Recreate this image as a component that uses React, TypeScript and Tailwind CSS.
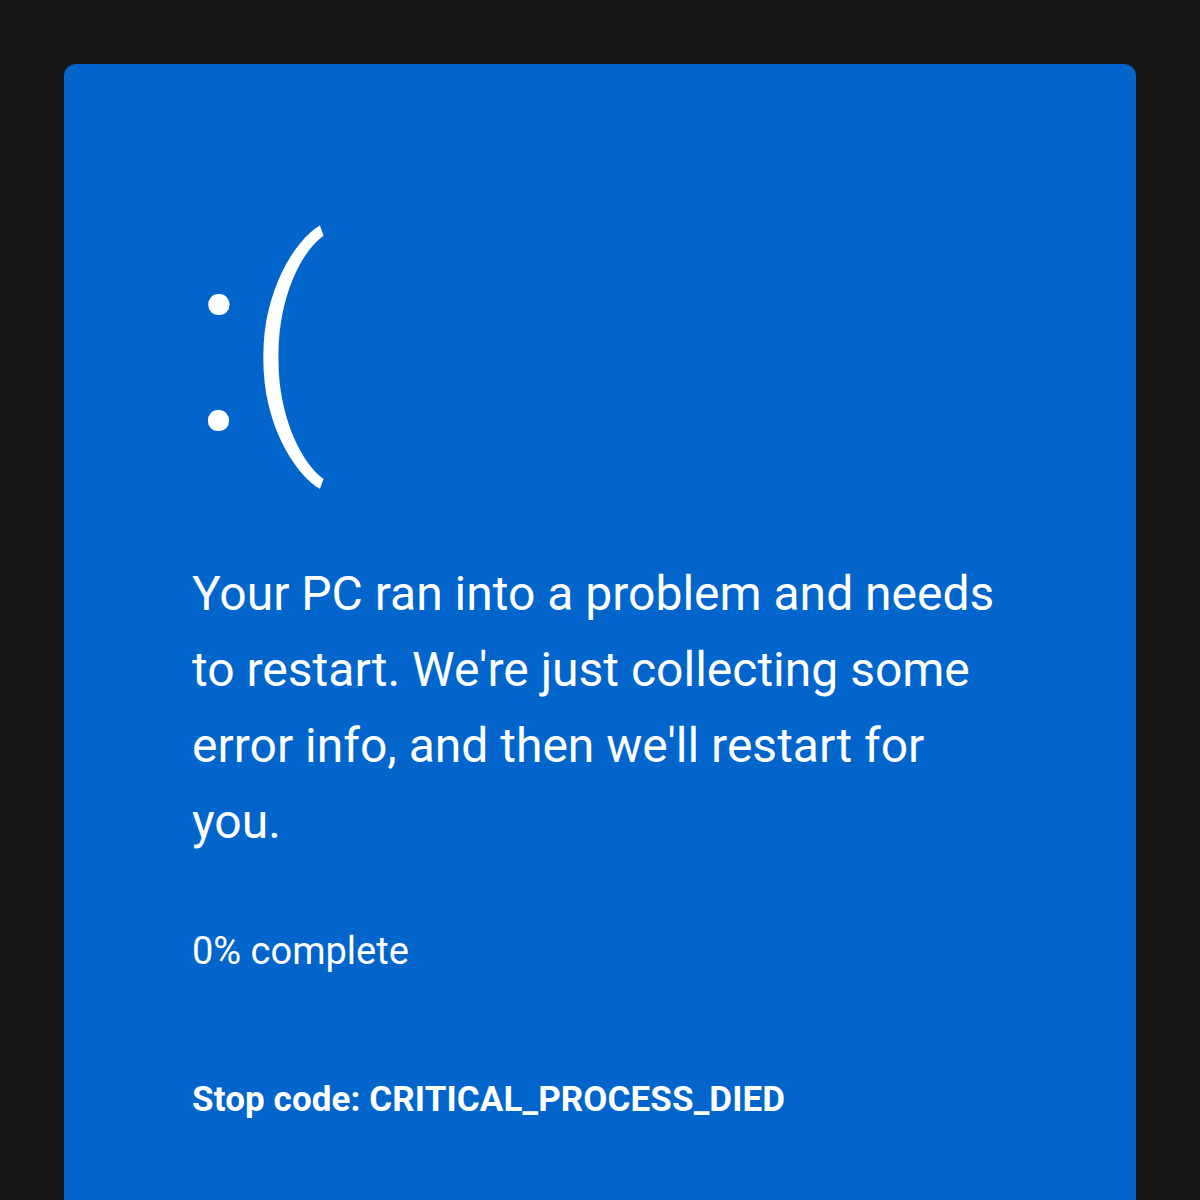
export default function App() {
  return (
    <div className="min-h-screen bg-[#171717] px-16 pt-16 overflow-hidden h-[1200px]">
      <div
        className="rounded-xl bg-[#0165cc] text-white pl-32 pr-32 pt-[151px] h-[1300px]"
        style={{ fontFamily: 'Roboto, "Noto Sans", sans-serif' }}
      >
        <div className="text-[256px] font-light leading-none">:(</div>
        <p className="mt-[85px] text-[48px] leading-[76px] max-w-[820px]">
          Your PC ran into a problem and needs to restart. We're just collecting some error info, and then we'll restart
          for you.
        </p>
        <p className="mt-[72px] text-[38px] leading-none">0% complete</p>
        <p className="mt-[112px] text-[35px] font-bold leading-none tracking-[0.1px]">Stop code: CRITICAL_PROCESS_DIED</p>
      </div>
    </div>
  );
}
